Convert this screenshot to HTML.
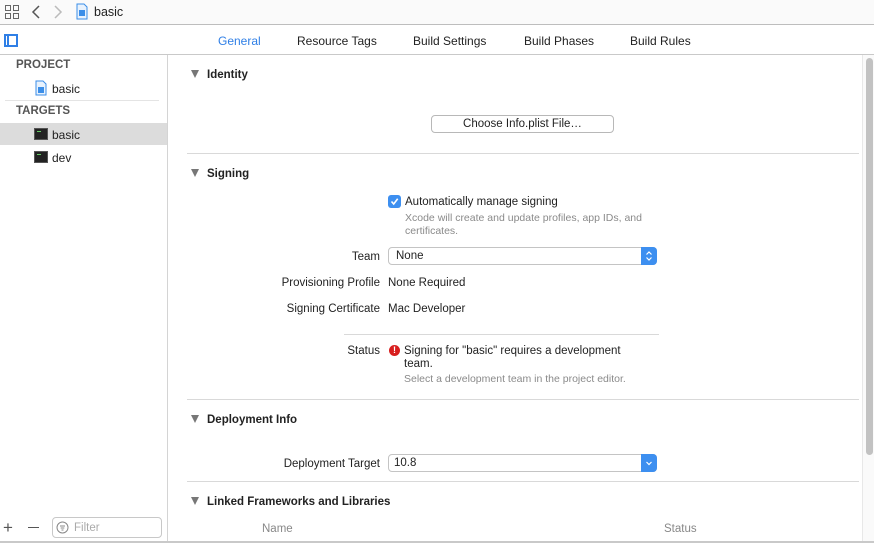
<!DOCTYPE html>
<html><head><style>
*{margin:0;padding:0;box-sizing:border-box}
body{width:874px;height:543px;overflow:hidden;background:#fff;font-family:"Liberation Sans",sans-serif;font-size:11.5px;color:#222;position:relative}
.a{position:absolute;white-space:nowrap}
.hl{position:absolute;height:1px;background:#d9d9d9}
.b{font-weight:bold}
.r{text-align:right}
.tri{position:absolute;width:0;height:0;border-left:4.5px solid transparent;border-right:4.5px solid transparent;border-top:8px solid #777}
.g{color:#8a8a8a;font-size:10.5px}
.term{position:absolute;width:14px;height:12px;background:#222;border:1px solid #555}
.term:after{content:"";position:absolute;left:2px;top:2px;width:4px;height:1px;background:#6c6}
</style></head><body>
<div class="a" style="left:0;top:0;width:874px;height:25px;background:#fafafa;border-bottom:1px solid #bdbdbd"></div>
<svg class="a" style="left:4px;top:4px" width="16" height="16" viewBox="0 0 16 16" fill="none" stroke="#666" stroke-width="1"><rect x="1.5" y="1.5" width="5" height="5"/><rect x="9.5" y="1.5" width="5" height="5"/><rect x="1.5" y="9.5" width="5" height="5"/><rect x="9.5" y="9.5" width="5" height="5"/></svg>
<svg class="a" style="left:30px;top:4px" width="12" height="16"><path d="M9 2L3 8L9 14" fill="none" stroke="#555" stroke-width="1.5"/></svg>
<svg class="a" style="left:52px;top:4px" width="12" height="16"><path d="M3 2L9 8L3 14" fill="none" stroke="#bbb" stroke-width="1.5"/></svg>
<svg class="a" style="left:76px;top:3px" width="12" height="17"><path d="M1 1H8L11 4V16H1Z" fill="#e8f2fd" stroke="#3b8ee8"/><rect x="3" y="7" width="6" height="6" fill="#3b8ee8"/></svg>
<div class="a" style="left:94px;top:5px;font-size:12.5px">basic</div>
<div class="a" style="left:0;top:26px;width:874px;height:29px;border-bottom:1px solid #c9c9c9"></div>
<div class="a" style="left:4px;top:34px;width:14px;height:13px;border:2px solid #2f7fe6"></div>
<div class="a" style="left:7px;top:36px;width:2px;height:9px;background:#2f7fe6"></div>
<div class="a" style="left:218px;top:34px;color:#2f7fe6;font-size:12px">General</div>
<div class="a" style="left:297px;top:34px;font-size:12px">Resource Tags</div>
<div class="a" style="left:413px;top:34px;font-size:12px">Build Settings</div>
<div class="a" style="left:524px;top:34px;font-size:12px">Build Phases</div>
<div class="a" style="left:630px;top:34px;font-size:12px">Build Rules</div>
<div class="a" style="left:167px;top:55px;width:1px;height:486px;background:#d4d4d4"></div>
<div class="a b" style="left:16px;top:59px;color:#555;font-size:11.5px">PROJECT</div>
<svg class="a" style="left:35px;top:80px" width="12" height="16"><path d="M1 1H8L11 4V15H1Z" fill="#e8f2fd" stroke="#3b8ee8"/><rect x="3" y="7" width="6" height="6" fill="#3b8ee8"/></svg>
<div class="a" style="left:52px;top:82px;font-size:12px">basic</div>
<div class="hl" style="left:5px;top:100px;width:154px;background:#e4e4e4"></div>
<div class="a b" style="left:16px;top:105px;color:#555">TARGETS</div>
<div class="a" style="left:0;top:123px;width:167px;height:22px;background:#dcdcdc"></div>
<div class="term" style="left:34px;top:128px"></div>
<div class="a" style="left:52px;top:128px;font-size:12px">basic</div>
<div class="term" style="left:34px;top:151px"></div>
<div class="a" style="left:52px;top:151px;font-size:12px">dev</div>
<div class="a" style="left:3px;top:518px;font-size:17px;color:#555">+</div>
<div class="a" style="left:28px;top:527px;width:11px;height:1px;background:#555"></div>
<div class="a" style="left:52px;top:517px;width:110px;height:21px;border:1px solid #c8c8c8;border-radius:4px"></div>
<svg class="a" style="left:56px;top:521px" width="13" height="13"><circle cx="6.5" cy="6.5" r="5.5" fill="none" stroke="#888"/><path d="M4 5H9M4.7 7H8.3M5.5 9H7.5" stroke="#888"/></svg>
<div class="a" style="left:74px;top:522px;color:#aaa;font-size:11.5px">Filter</div>
<div class="a" style="left:0;top:541px;width:874px;height:2px;background:#c9c9c9"></div>
<div class="a" style="left:862px;top:55px;width:12px;height:486px;background:#fafafa;border-left:1px solid #e8e8e8"></div>
<div class="a" style="left:866px;top:58px;width:7px;height:397px;background:#c2c2c2;border-radius:4px"></div>
<div class="tri" style="left:191px;top:70px"></div>
<div class="a b" style="left:207px;top:69px">Identity</div>
<div class="a" style="left:431px;top:115px;width:183px;height:18px;border:1px solid #b8b8b8;border-radius:4px;text-align:center;line-height:17px;font-size:11.5px">Choose Info.plist File…</div>
<div class="hl" style="left:187px;top:153px;width:672px"></div>
<div class="tri" style="left:191px;top:169px"></div>
<div class="a b" style="left:207px;top:168px">Signing</div>
<div class="a" style="left:388px;top:195px;width:13px;height:13px;background:#3d8ff0;border-radius:3px"></div>
<svg class="a" style="left:388px;top:195px" width="13" height="13"><path d="M3.5 6.5L5.7 9L9.7 3.8" fill="none" stroke="#fff" stroke-width="1.6"/></svg>
<div class="a" style="left:405px;top:196px">Automatically manage signing</div>
<div class="a g" style="left:405px;top:212px">Xcode will create and update profiles, app IDs, and</div>
<div class="a g" style="left:405px;top:225px">certificates.</div>
<div class="a r" style="left:180px;width:200px;top:251px">Team</div>
<div class="a" style="left:388px;top:247px;width:269px;height:18px;border:1px solid #c4c4c4;border-radius:4px;padding-left:7px;line-height:17px">None</div>
<div class="a" style="left:641px;top:247px;width:16px;height:18px;background:#3d8ff0;border-radius:0 4px 4px 0"></div>
<svg class="a" style="left:644px;top:249px" width="10" height="14"><path d="M2.5 5.5L5 3L7.5 5.5M2.5 8.5L5 11L7.5 8.5" fill="none" stroke="#fff" stroke-width="1.2"/></svg>
<div class="a r" style="left:180px;width:200px;top:277px">Provisioning Profile</div>
<div class="a" style="left:388px;top:277px">None Required</div>
<div class="a r" style="left:180px;width:200px;top:303px">Signing Certificate</div>
<div class="a" style="left:388px;top:303px">Mac Developer</div>
<div class="hl" style="left:344px;top:334px;width:315px"></div>
<div class="a r" style="left:180px;width:200px;top:345px">Status</div>
<div class="a" style="left:389px;top:345px;width:11px;height:11px;border-radius:50%;background:#d81e1e;color:#fff;font-size:9px;font-weight:bold;text-align:center;line-height:11px">!</div>
<div class="a" style="left:404px;top:345px">Signing for "basic" requires a development</div>
<div class="a" style="left:404px;top:358px">team.</div>
<div class="a g" style="left:404px;top:373px">Select a development team in the project editor.</div>
<div class="hl" style="left:187px;top:399px;width:672px"></div>
<div class="tri" style="left:191px;top:415px"></div>
<div class="a b" style="left:207px;top:414px">Deployment Info</div>
<div class="a r" style="left:180px;width:200px;top:458px">Deployment Target</div>
<div class="a" style="left:388px;top:454px;width:269px;height:18px;border:1px solid #c4c4c4;border-radius:4px;padding-left:5px;line-height:17px">10.8</div>
<div class="a" style="left:641px;top:454px;width:16px;height:18px;background:#3d8ff0;border-radius:0 4px 4px 0"></div>
<svg class="a" style="left:644px;top:456px" width="10" height="14"><path d="M2.5 6L5 8.5L7.5 6" fill="none" stroke="#fff" stroke-width="1.2"/></svg>
<div class="hl" style="left:187px;top:481px;width:672px"></div>
<div class="tri" style="left:191px;top:497px"></div>
<div class="a b" style="left:207px;top:496px">Linked Frameworks and Libraries</div>
<div class="a" style="left:262px;top:523px;color:#888">Name</div>
<div class="a" style="left:664px;top:523px;color:#888">Status</div>
</body></html>
